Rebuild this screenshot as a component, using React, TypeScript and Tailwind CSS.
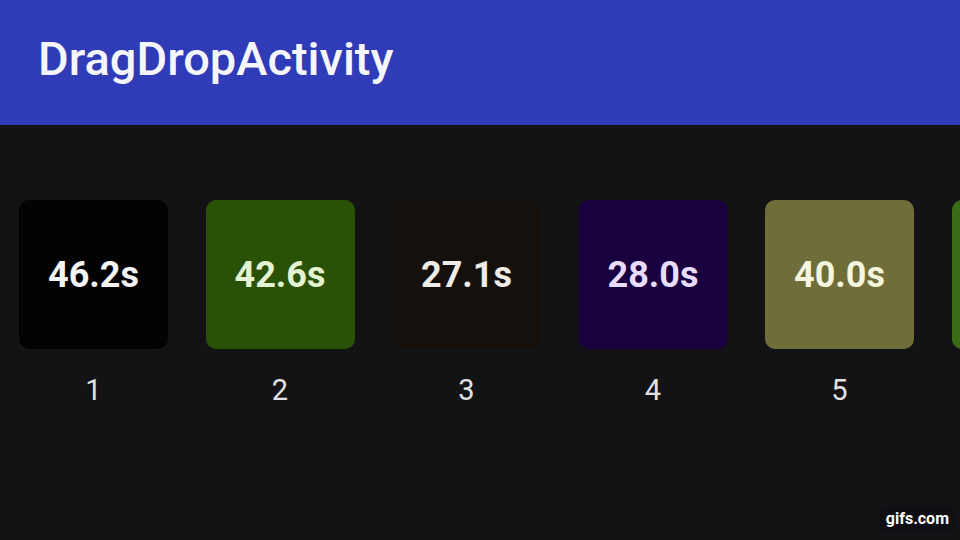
import React from 'react';

type Tile = { id: number; time: string; bg: string; fg: string };

const tiles: Tile[] = [
  { id: 1, time: '46.2s', bg: 'bg-[#030306]', fg: 'text-[#f4f4f4]' },
  { id: 2, time: '42.6s', bg: 'bg-[#2a5207]', fg: 'text-[#e4f3d2]' },
  { id: 3, time: '27.1s', bg: 'bg-[#16100c]', fg: 'text-[#efebe6]' },
  { id: 4, time: '28.0s', bg: 'bg-[#19003f]', fg: 'text-[#e9dcfb]' },
  { id: 5, time: '40.0s', bg: 'bg-[#6f6e3b]', fg: 'text-[#f6f5de]' },
];

export default function App() {
  return (
    <div className="relative h-[540px] w-[960px] overflow-hidden bg-[#131316] font-['Roboto','Liberation_Sans',sans-serif]">
      <header className="flex h-[125px] items-center bg-[#2f3bb7] px-[38px] pb-[6px]">
        <h1 className="text-[47px] font-medium text-[#f5f6fb]">DragDropActivity</h1>
      </header>

      <div className="flex gap-[37.5px] pl-[19px] pt-[75px]">
        {tiles.map((tile) => (
          <div key={tile.id} className="flex shrink-0 flex-col items-center">
            <div className={`flex h-[149px] w-[149px] items-center justify-center rounded-[10px] ${tile.bg}`}>
              <span className={`text-[36px] font-bold leading-none ${tile.fg}`}>{tile.time}</span>
            </div>
            <span className="mt-[27px] text-[29px] leading-none text-[#e2e2e2]">{tile.id}</span>
          </div>
        ))}
        {/* next tile, only its left edge is on screen */}
        <div className="h-[149px] w-[149px] shrink-0 rounded-[10px] bg-[#3d6c19]" />
      </div>

      <div className="absolute bottom-[8px] right-[5px] rounded-[6px] bg-[#101014] px-[6px] py-[1px] text-[16px] font-bold text-white">
        gifs.com
      </div>
    </div>
  );
}
